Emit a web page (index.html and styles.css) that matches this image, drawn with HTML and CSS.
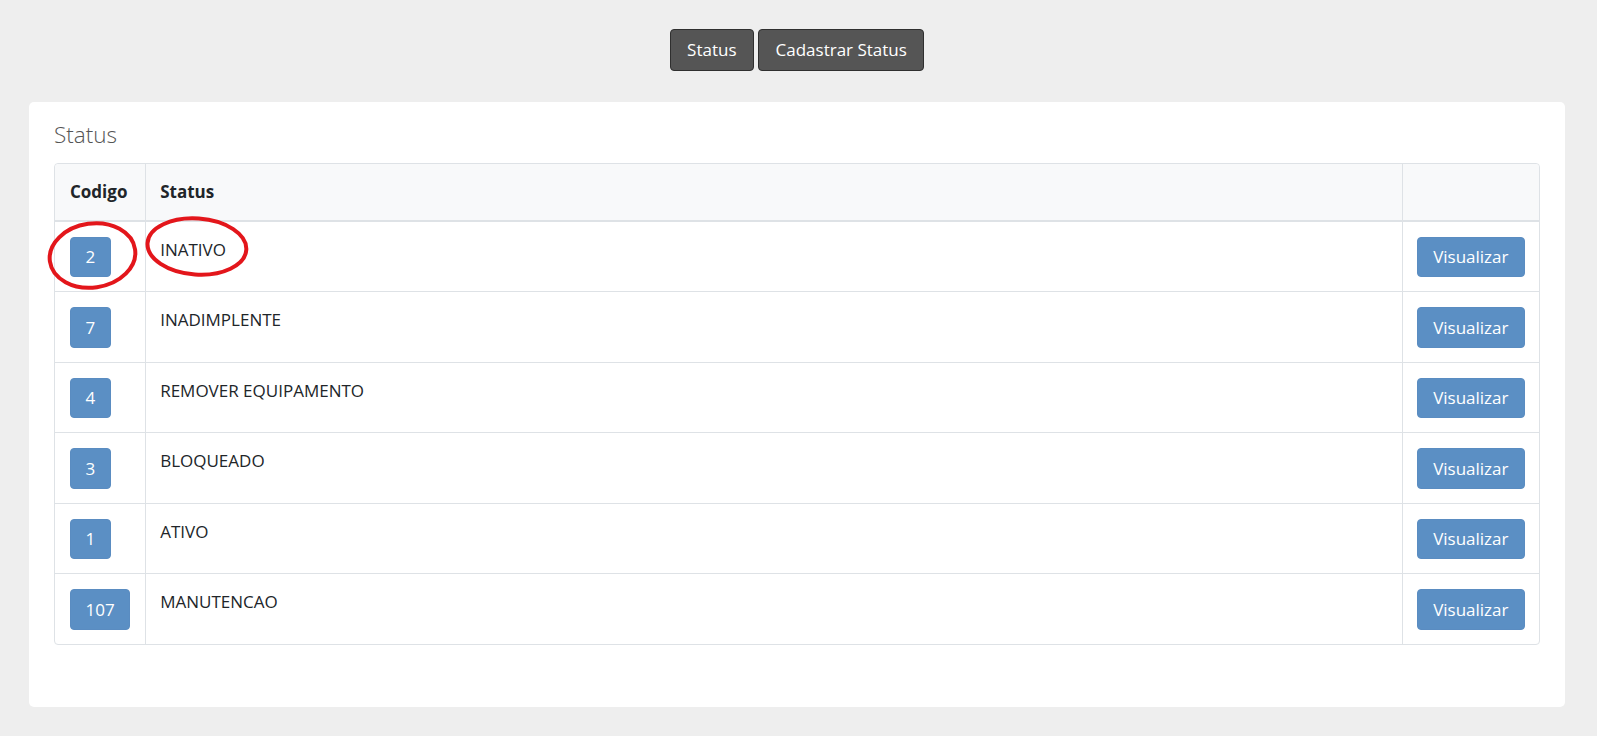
FILE: index.html
```html
<!DOCTYPE html>
<html lang="pt">
<head>
    <meta charset="UTF-8">
    <meta name="viewport" content="width=device-width, initial-scale=1.0">
    <title>Status</title>
    <link rel="stylesheet" href="styles.css">
</head>
<body>
    <div class="page">
        <nav class="top-nav">
            <a href="#" class="nav-btn">Status</a>
            <a href="#" class="nav-btn">Cadastrar Status</a>
        </nav>

        <div class="card">
            <h5 class="card-title">Status</h5>
            <div class="table-wrap">
                <table class="status-table">
                    <thead>
                        <tr>
                            <th class="col-code">Codigo</th>
                            <th>Status</th>
                            <th class="col-action"></th>
                        </tr>
                    </thead>
                    <tbody>
                        <tr>
                            <td class="col-code"><span class="btn-blue">2</span></td>
                            <td>INATIVO</td>
                            <td class="col-action"><a href="#" class="btn-blue">Visualizar</a></td>
                        </tr>
                        <tr>
                            <td class="col-code"><span class="btn-blue">7</span></td>
                            <td>INADIMPLENTE</td>
                            <td class="col-action"><a href="#" class="btn-blue">Visualizar</a></td>
                        </tr>
                        <tr>
                            <td class="col-code"><span class="btn-blue">4</span></td>
                            <td>REMOVER EQUIPAMENTO</td>
                            <td class="col-action"><a href="#" class="btn-blue">Visualizar</a></td>
                        </tr>
                        <tr>
                            <td class="col-code"><span class="btn-blue">3</span></td>
                            <td>BLOQUEADO</td>
                            <td class="col-action"><a href="#" class="btn-blue">Visualizar</a></td>
                        </tr>
                        <tr>
                            <td class="col-code"><span class="btn-blue">1</span></td>
                            <td>ATIVO</td>
                            <td class="col-action"><a href="#" class="btn-blue">Visualizar</a></td>
                        </tr>
                        <tr>
                            <td class="col-code"><span class="btn-blue">107</span></td>
                            <td>MANUTENCAO</td>
                            <td class="col-action"><a href="#" class="btn-blue">Visualizar</a></td>
                        </tr>
                    </tbody>
                </table>

                <!-- marcações em vermelho -->
                <svg class="marks" width="260" height="140" viewBox="0 0 260 140">
                    <ellipse cx="38.5" cy="92.5" rx="43" ry="32" transform="rotate(-8 38.5 92.5)"/>
                    <ellipse cx="142.9" cy="83.5" rx="49.5" ry="28" transform="rotate(4 142.9 83.5)"/>
                </svg>
            </div>
        </div>
    </div>
</body>
</html>
```

FILE: styles.css
```css
* {
    box-sizing: border-box;
}

body {
    margin: 0;
    background: #eeeeee;
    font-family: "Open Sans", "Liberation Sans", sans-serif;
    font-size: 17px;
    color: #212529;
}

.page {
    padding: 29px 32px 29px 29px;
}

.top-nav {
    display: flex;
    justify-content: center;
    gap: 4px;
    margin-bottom: 31px;
}

.nav-btn {
    display: inline-block;
    background: #555555;
    color: #fff;
    border: 1px solid #2f2f2f;
    border-radius: 4px;
    padding: 7px 16.5px;
    line-height: 26px;
    text-decoration: none;
}

.card {
    background: #fff;
    border-radius: 5px;
    padding: 20px 25px 62px;
}

.card-title {
    margin: 0 0 16px;
    font-size: 22.5px;
    font-weight: 300;
    line-height: 25px;
    color: #555;
}

.table-wrap {
    position: relative;
}

.status-table {
    width: 100%;
    border-collapse: separate;
    border-spacing: 0;
    border: 1px solid #dee2e6;
    border-radius: 4px;
}

.status-table th,
.status-table td {
    text-align: left;
    vertical-align: top;
    line-height: 25.5px;
    border-left: 1px solid #dee2e6;
}

.status-table th {
    padding: 15px 14px;
    font-weight: 700;
    background: #f8f9fa;
    border-bottom: 2px solid #dee2e6;
}

.status-table td {
    padding: 15px 14px 14px;
    border-top: 1px solid #dee2e6;
}

.status-table tbody tr:first-child td {
    border-top: none;
}

.status-table th:first-child,
.status-table td:first-child {
    border-left: none;
}

.status-table thead th:first-child {
    border-top-left-radius: 4px;
}

.status-table thead th:last-child {
    border-top-right-radius: 4px;
}

.status-table .col-code {
    width: 1%;
    padding-left: 15px;
    padding-right: 15px;
    white-space: nowrap;
}

.status-table .col-action {
    width: 1%;
    padding-left: 14.5px;
    padding-right: 14.5px;
    white-space: nowrap;
}

.btn-blue {
    display: inline-block;
    vertical-align: top;
    background: #5b8fc4;
    color: #fff;
    border: 1px solid #5a8cc1;
    border-radius: 4px;
    padding: 6.5px 15px;
    line-height: 25.5px;
    text-decoration: none;
}

.col-code .btn-blue {
    padding: 6.5px 14.5px;
}

.marks {
    position: absolute;
    left: 0;
    top: 0;
    overflow: visible;
    pointer-events: none;
}

.marks ellipse {
    fill: none;
    stroke: #e3161b;
    stroke-width: 4;
}
```
